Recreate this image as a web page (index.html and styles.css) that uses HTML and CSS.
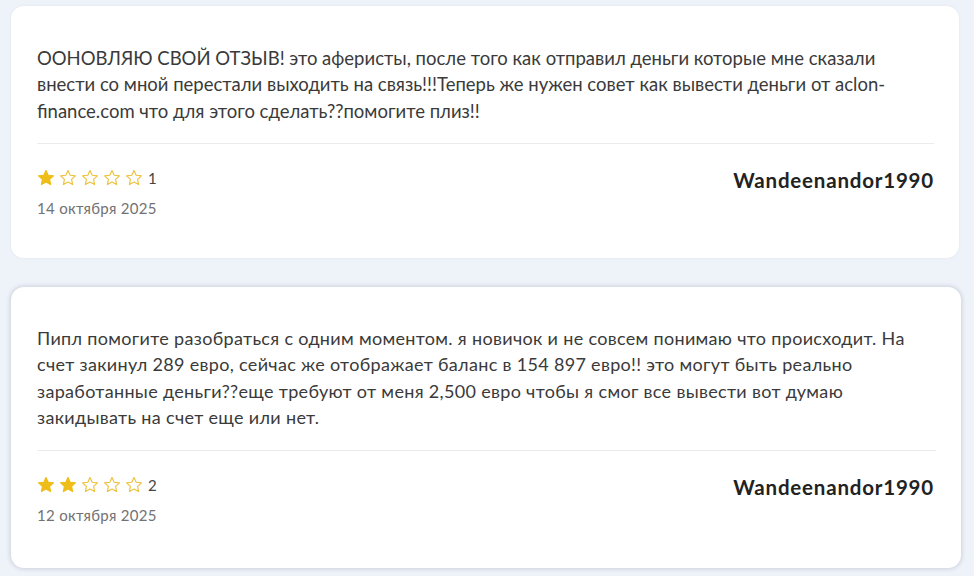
FILE: index.html
```html
<!DOCTYPE html>
<html lang="ru">
<head>
<meta charset="utf-8">
<link rel="stylesheet" href="styles.css">
</head>
<body>
<svg width="0" height="0" class="defs">
  <defs>
    <path id="star" d="M10 1.6l2.47 5.3 5.8.7-4.28 3.98 1.12 5.74L10 14.5l-5.11 2.82 1.12-5.74L1.73 7.6l5.8-.7z"/>
  </defs>
</svg>
<main class="list">
  <article class="card card-first">
    <p class="text text-tall">ООНОВЛЯЮ СВОЙ ОТЗЫВ! это аферисты, после того как отправил деньги которые мне сказали внести со мной перестали выходить на связь!!!Теперь же нужен совет как вывести деньги от aclon-finance.com что для этого сделать??помогите плиз!!</p>
    <div class="divider"></div>
    <div class="meta">
      <div class="left">
        <div class="rating">
          <svg class="st full" viewBox="0 0 20 20"><use href="#star"/></svg>
          <svg class="st" viewBox="0 0 20 20"><use href="#star"/></svg>
          <svg class="st" viewBox="0 0 20 20"><use href="#star"/></svg>
          <svg class="st" viewBox="0 0 20 20"><use href="#star"/></svg>
          <svg class="st" viewBox="0 0 20 20"><use href="#star"/></svg>
          <span class="num">1</span>
        </div>
        <div class="date">14 октября 2025</div>
      </div>
      <div class="author">Wandeenandor1990</div>
    </div>
  </article>
  <article class="card card-second">
    <p class="text">Пипл помогите разобраться с одним моментом. я новичок и не совсем понимаю что происходит. На счет закинул 289 евро, сейчас же отображает баланс в 154 897 евро!! это могут быть реально заработанные деньги??еще требуют от меня 2,500 евро чтобы я смог все вывести вот думаю закидывать на счет еще или нет.</p>
    <div class="divider"></div>
    <div class="meta">
      <div class="left">
        <div class="rating">
          <svg class="st full" viewBox="0 0 20 20"><use href="#star"/></svg>
          <svg class="st full" viewBox="0 0 20 20"><use href="#star"/></svg>
          <svg class="st" viewBox="0 0 20 20"><use href="#star"/></svg>
          <svg class="st" viewBox="0 0 20 20"><use href="#star"/></svg>
          <svg class="st" viewBox="0 0 20 20"><use href="#star"/></svg>
          <span class="num">2</span>
        </div>
        <div class="date">12 октября 2025</div>
      </div>
      <div class="author">Wandeenandor1990</div>
    </div>
  </article>
</main>
</body>
</html>
```
FILE: styles.css
```css
* { box-sizing: border-box; }
html, body { margin: 0; padding: 0; }
body {
  background: #eef2f9;
  font-family: "Lato", "Noto Sans", sans-serif;
  color: #363636;
  width: 974px;
  height: 576px;
  overflow: hidden;
}
.defs { position: absolute; }
.list {
  display: flex;
  flex-direction: column;
  gap: 29px;
  padding: 6px 15px 0 11px;
}
.card {
  background: #fff;
  border-radius: 13px;
  padding: 39px 25px 42px 26px;
}
.card-first {
  height: 252px;
  box-shadow: 0 0 3px rgba(40, 60, 110, 0.06);
}
.card-second {
  height: 281px;
  margin-right: -2px;
  padding-top: 38px;
  box-shadow: 0 0 4px 1px rgba(30, 40, 70, 0.16);
}
.text {
  margin: 0;
  font-size: 18px;
  letter-spacing: 0.32px;
  line-height: 26.4px;
  color: #3a3a3a;
  padding-right: 20px;
}
.text-tall {
  font-size: 18.5px;
  letter-spacing: 0;
  padding-right: 0;
}
.divider {
  height: 1px;
  background: #ececec;
  margin: 19px 0 0;
}
.meta {
  display: flex;
  justify-content: space-between;
  align-items: flex-start;
  padding-top: 24px;
}
.rating {
  display: flex;
  align-items: center;
  gap: 4px;
  height: 20px;
}
.st {
  width: 18px;
  height: 18px;
  fill: none;
  stroke: #ecc23e;
  stroke-width: 1.3;
  stroke-linejoin: round;
}
.st.full { fill: #efbd18; stroke: #efbd18; }
.num {
  font-size: 15px;
  color: #444;
  margin-left: 1px;
}
.date {
  margin-top: 11px;
  font-size: 15px;
  letter-spacing: 0.3px;
  color: #727272;
}
.author {
  font-weight: 700;
  font-size: 20.5px;
  letter-spacing: 0.8px;
  color: #222;
  margin-top: 0;
}
.card-second .author { margin-right: 2px; }
```
